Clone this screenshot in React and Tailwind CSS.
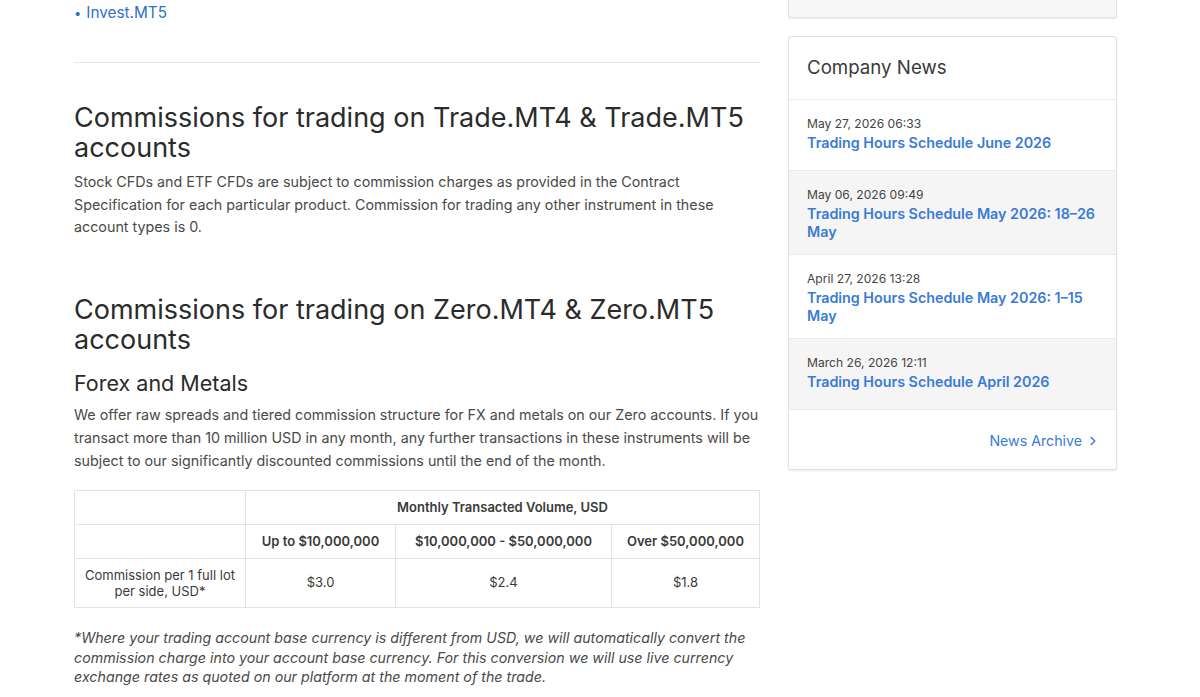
import { ChevronRight } from "lucide-react"

const news = [
  { date: "May 27, 2026 06:33", title: "Trading Hours Schedule June 2026", shade: false },
  { date: "May 06, 2026 09:49", title: "Trading Hours Schedule May 2026: 18–26 May", shade: true },
  { date: "April 27, 2026 13:28", title: "Trading Hours Schedule May 2026: 1–15 May", shade: false },
  { date: "March 26, 2026 12:11", title: "Trading Hours Schedule April 2026", shade: true },
]

const tiers = [
  { label: "Up to $10,000,000", value: "$3.0", w: "w-[150px]" },
  { label: "$10,000,000 - $50,000,000", value: "$2.4", w: "w-[216px]" },
  { label: "Over $50,000,000", value: "$1.8", w: "" },
]

export default function App() {
  return (
    <div className="min-h-[697px] bg-white font-['Inter','Noto_Sans',sans-serif] text-[#3a3a3a]">
      <div className="flex gap-[28px] pl-[74px]">
        {/* main column */}
        <main className="w-[686px] shrink-0">
          <ul className="pt-[3px]">
            <li className="flex items-center gap-[5px] text-[15.3px] leading-[20px] text-[#2f6fcb]">
              <span className="text-[13px] leading-none">•</span>
              <span>Invest.MT5</span>
            </li>
          </ul>

          <hr className="mt-[39px] border-t border-[#e6e6e6]" />

          <h2 className="mt-[40px] text-[27px] leading-[30px] text-[#2b2b2b]">
            Commissions for trading on Trade.MT4 &amp; Trade.MT5 accounts
          </h2>
          <p className="mt-[8px] text-[14.3px] leading-[22.5px] text-[#4a4a4a]">
            Stock CFDs and ETF CFDs are subject to commission charges as provided in the Contract Specification for each particular product. Commission for trading any other instrument in these account types is 0.
          </p>

          <h2 className="mt-[56px] text-[27px] leading-[30px] text-[#2b2b2b]">
            Commissions for trading on Zero.MT4 &amp; Zero.MT5 accounts
          </h2>
          <h3 className="mt-[15px] text-[21.5px] leading-[26px] text-[#2b2b2b]">Forex and Metals</h3>
          <p className="mt-[7.5px] text-[14.3px] leading-[23px] text-[#4a4a4a]">
            We offer raw spreads and tiered commission structure for FX and metals on our Zero accounts. If you transact more than 10 million USD in any month, any further transactions in these instruments will be subject to our significantly discounted commissions until the end of the month.
          </p>

          <table className="mt-[18px] w-full border-collapse text-[13px] text-[#3a3a3a]">
            <tbody>
              <tr className="h-[34px]">
                <td className="w-[171px] border border-[#e3e3e3]"></td>
                <td colSpan={3} className="border border-[#e3e3e3] text-center font-semibold">
                  Monthly Transacted Volume, USD
                </td>
              </tr>
              <tr className="h-[34px]">
                <td className="border border-[#e3e3e3]"></td>
                {tiers.map((t) => (
                  <td key={t.label} className={`${t.w} border border-[#e3e3e3] text-center font-semibold`}>
                    {t.label}
                  </td>
                ))}
              </tr>
              <tr className="h-[49px]">
                <td className="border border-[#e3e3e3] px-2 text-center leading-[16px]">
                  Commission per 1 full lot per side, USD*
                </td>
                {tiers.map((t) => (
                  <td key={t.value} className="border border-[#e3e3e3] text-center">
                    {t.value}
                  </td>
                ))}
              </tr>
            </tbody>
          </table>

          <p className="mt-[20px] text-[14.25px] leading-[19.5px] italic text-[#4a4a4a]">
            *Where your trading account base currency is different from USD, we will automatically convert the commission charge into your account base currency. For this conversion we will use live currency exchange rates as quoted on our platform at the moment of the trade.
          </p>
        </main>

        {/* sidebar */}
        <aside className="w-[329px] shrink-0">
          <div className="h-[18px] rounded-b-[3px] border border-t-0 border-[#e2e2e2] bg-[#f7f7f7] shadow-[0_1px_2px_rgba(0,0,0,0.08)]" />

          <div className="mt-[18px] rounded-[3px] border border-[#e2e2e2] bg-white shadow-[0_1px_2px_rgba(0,0,0,0.08)]">
            <div className="flex h-[63px] items-center border-b border-[#ebebeb] px-[18px]">
              <h4 className="text-[18.7px] text-[#3a3a3a]">Company News</h4>
            </div>
            {news.map((n) => (
              <div
                key={n.date}
                className={`min-h-[71px] border-b border-[#ebebeb] pb-[13px] pl-[18px] pr-[14px] pt-[16px] ${n.shade ? "bg-[#f5f5f5]" : "bg-white"}`}
              >
                <div className="text-[12.1px] leading-[16px] text-[#444]">{n.date}</div>
                <a className="mt-[2px] block text-[14.3px] font-semibold leading-[18px] text-[#3a7bd5]">
                  {n.title}
                </a>
              </div>
            ))}
            <div className="flex h-[59px] items-center justify-end pr-[16px] pt-[3px]">
              <a className="flex items-center gap-[4px] text-[14.2px] text-[#3a7bd5]">
                News Archive
                <ChevronRight size={14} strokeWidth={2.5} />
              </a>
            </div>
          </div>
        </aside>
      </div>
    </div>
  )
}
